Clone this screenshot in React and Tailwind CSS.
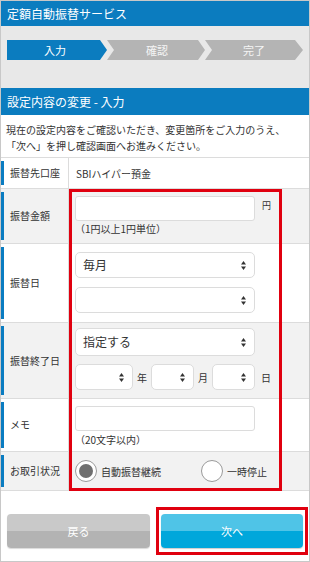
import React from "react";

const font = "font-['Noto_Sans_CJK_JP','Noto_Sans',sans-serif]";

function Arrows() {
  return (
    <svg width="5" height="9" viewBox="0 0 5 9" className="shrink-0">
      <polygon points="0,3.5 2.5,0 5,3.5" fill="#333" />
      <polygon points="0,5.5 2.5,9 5,5.5" fill="#333" />
    </svg>
  );
}

function Select({ className, text }) {
  return (
    <div
      className={`flex items-center justify-between bg-white border border-[#dcdcdc] rounded-[5px] pl-[7px] pr-[8px] text-[12px] text-[#333] ${className}`}
    >
      <span className="leading-none">{text}</span>
      <Arrows />
    </div>
  );
}

function Label({ children }) {
  return (
    <div className="w-[68px] shrink-0 flex items-stretch py-[3px] border-r border-[#dcdcdc]">
      <div className="w-[3px] bg-[#0a7cc1]" />
      <div className="flex items-center pl-[6px] text-[10px] text-[#333] leading-none whitespace-nowrap">{children}</div>
    </div>
  );
}

function Radio({ checked, label }) {
  return (
    <div className="flex items-center gap-[4px] shrink-0">
      <div className="w-[22px] h-[22px] rounded-full border-[1.5px] border-[#9a9a9a] bg-white flex items-center justify-center">
        {checked && <div className="w-[14px] h-[14px] rounded-full bg-[#6f6f6f]" />}
      </div>
      <span className="text-[10px] text-[#333] whitespace-nowrap">{label}</span>
    </div>
  );
}

export default function App() {
  return (
    <div className={`relative w-[310px] h-[562px] border border-[#c8c8c8] bg-white overflow-hidden ${font}`}>
      {/* HEADER */}
      <div className="h-[25px] bg-[#0b7cbf] flex items-center px-[6px] text-white text-[12px]">
        定額自動振替サービス
      </div>

      {/* STEPS */}
      <div className="h-[62px] bg-[#e8e8e8] pt-[14px] px-[5px]">
        <div className="relative w-[297px] h-[20px]">
          <svg width="297" height="20" viewBox="0 0 297 20" className="absolute inset-0">
            <polygon points="1,0 94,0 101,10 94,20 1,20" fill="#0b7cbf" />
            <polygon points="101,0 192,0 199,10 192,20 101,20 108,10" fill="#b4b4b4" />
            <polygon points="199,0 289,0 297,10 289,20 199,20 206,10" fill="#b4b4b4" />
          </svg>
          <span className="absolute left-[49px] top-0 -translate-x-1/2 leading-[20px] text-[11px] text-white">入力</span>
          <span className="absolute left-[151px] top-0 -translate-x-1/2 leading-[20px] text-[11px] text-[#f4f4f4]">確認</span>
          <span className="absolute left-[248px] top-0 -translate-x-1/2 leading-[20px] text-[11px] text-[#f4f4f4]">完了</span>
        </div>
      </div>

      {/* SECTION HEADER */}
      <div className="h-[27px] bg-[#0b7cbf] flex items-center px-[6px] text-white text-[12px]">
        設定内容の変更 - 入力
      </div>

      <div className="h-[42px] pt-[7px] px-[5px] text-[10px] leading-[16px] text-[#333]">
        <p>現在の設定内容をご確認いただき、変更箇所をご入力のうえ、</p>
        <p>「次へ」を押し確認画面へお進みください。</p>
      </div>

      {/* ROWS */}
      <div className="flex h-[31px] border-t border-[#dcdcdc]">
        <Label>振替先口座</Label>
        <div className="flex items-center pl-[7px] text-[10px] text-[#333]">SBIハイパー預金</div>
      </div>

      <div className="flex h-[55px] border-t border-[#dcdcdc] bg-[#f2f2f2]">
        <Label>振替金額</Label>
        <div className="pl-[6px] pt-[7px]">
          <div className="flex items-start">
            <div className="w-[180px] h-[25px] bg-white border border-[#dcdcdc] rounded-[3px]" />
            <span className="ml-[7px] mt-[5px] text-[9px] leading-none text-[#333]">円</span>
          </div>
          <div className="mt-[1px] text-[10px] leading-[14px] text-[#333]">（1円以上1円単位）</div>
        </div>
      </div>

      <div className="flex h-[79px] border-t border-[#dcdcdc]">
        <Label>振替日</Label>
        <div className="pl-[6px] pt-[8px] flex flex-col gap-[9px]">
          <Select className="w-[180px] h-[26px]" text="毎月" />
          <Select className="w-[180px] h-[26px]" text="" />
        </div>
      </div>

      <div className="flex h-[76px] border-t border-[#dcdcdc] bg-[#f2f2f2]">
        <Label>振替終了日</Label>
        <div className="pl-[6px] pt-[5px] flex flex-col gap-[8px]">
          <Select className="w-[180px] h-[28px]" text="指定する" />
          <div className="flex items-center text-[10px] text-[#333]">
            <Select className="w-[58px] h-[26px]" text="" />
            <span className="w-[18px] text-center">年</span>
            <Select className="w-[43px] h-[26px]" text="" />
            <span className="w-[18px] text-center">月</span>
            <Select className="w-[43px] h-[26px]" text="" />
            <span className="ml-[6px]">日</span>
          </div>
        </div>
      </div>

      <div className="flex h-[53px] border-t border-[#dcdcdc]">
        <Label>メモ</Label>
        <div className="pl-[6px] pt-[7px]">
          <div className="w-[180px] h-[25px] bg-white border border-[#dcdcdc] rounded-[3px]" />
          <div className="mt-[2px] text-[10px] leading-[14px] text-[#333]">（20文字以内）</div>
        </div>
      </div>

      <div className="flex h-[40px] border-y border-[#dcdcdc] bg-[#f2f2f2]">
        <Label>お取引状況</Label>
        <div className="flex items-center pl-[6px] gap-[40px]">
          <Radio checked label="自動振替継続" />
          <Radio label="一時停止" />
        </div>
      </div>

      {/* BUTTONS */}
      <div className="flex gap-[11px] pl-[6px] pt-[23px]">
        <button className="w-[143px] h-[34px] rounded-[4px] bg-[linear-gradient(#c9c9c9_50%,#b3b3b3_50%)] text-white text-[11px] shadow-[0_1px_1px_rgba(0,0,0,0.15)]">
          戻る
        </button>
        <button className="w-[142px] h-[34px] rounded-[4px] bg-[linear-gradient(#4fc4e7_50%,#00a7db_50%)] text-white text-[11px] shadow-[0_1px_1px_rgba(0,0,0,0.2)]">
          次へ
        </button>
      </div>

      {/* HIGHLIGHTS */}
      <div className="absolute left-[68px] top-[188px] w-[213px] h-[302px] border-[3px] border-[#e0000f]" />
      <div className="absolute left-[155px] top-[506px] w-[152px] h-[48px] border-[3px] border-[#e0000f]" />
    </div>
  );
}
